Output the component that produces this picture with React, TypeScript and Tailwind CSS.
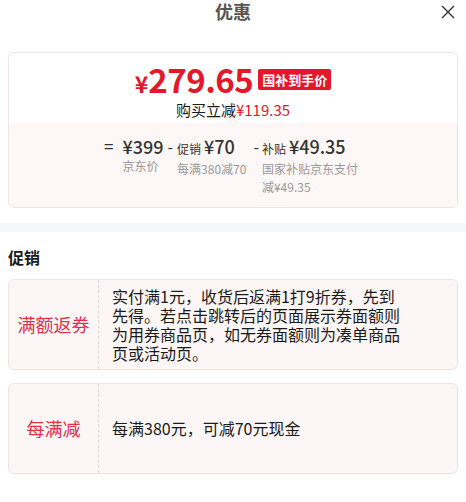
import React from "react";

const F = { fontFamily: '"Noto Sans CJK SC", "Noto Sans", sans-serif' };

function PromoCard({ label, lines }: { label: string; lines: string[] }) {
  return (
    <div className="flex h-[91px] rounded-[6px] border border-[#f1e1e4] bg-[#fdf6f7]">
      <div className="flex w-[90px] shrink-0 items-center justify-center border-r border-dashed border-[#e6d3d7] text-[18px] text-[#e0304a]">
        {label}
      </div>
      <div className="flex flex-1 flex-col justify-center pl-[13px] text-[16px] leading-[19px] text-[#1a1a1a]">
        {lines.map((l, i) => (
          <div key={i} className="whitespace-nowrap">
            {l}
          </div>
        ))}
      </div>
    </div>
  );
}

export default function App() {
  return (
    <div style={F} className="w-[466px] h-[502px] overflow-hidden bg-white">
      {/* header */}
      <div className="relative flex h-[22px] items-start justify-center pt-[2px]">
        <span className="text-[18px] font-bold text-[#555] leading-[18px]">优惠</span>
        <svg
          className="absolute right-[11px] top-[5px]"
          width="14"
          height="14"
          viewBox="0 0 14 14"
          fill="none"
          stroke="#333"
          strokeWidth="1.4"
        >
          <path d="M1 1L13 13M13 1L1 13" />
        </svg>
      </div>

      {/* price card */}
      <div className="mx-[8px] mt-[30px] overflow-hidden rounded-[6px] border border-[#f0e3e6]">
        <div className="flex h-[70px] flex-col items-center pt-[10px]">
          <div className="flex items-center">
            <span className="flex items-baseline font-bold text-[#e4172b] leading-none">
              <span className="text-[23px]">¥</span>
              <span className="text-[33px] tracking-[-0.5px]">279.65</span>
            </span>
            <span className="ml-[5px] rounded-[2px] bg-[#e4172b] px-[4px] text-[13px] font-bold leading-[21px] text-white">
              国补到手价
            </span>
          </div>
          <div className="mt-[4px] text-[15px] leading-[20px] text-[#1a1a1a]">
            购买立减<span className="text-[#e4172b]">¥119.35</span>
          </div>
        </div>
        <div className="relative bg-[#fdf7f8] pb-[11px] pt-[12px]">
          <div className="absolute left-1/2 top-[-4px] h-[8px] w-[8px] -translate-x-1/2 rotate-45 border-l border-t border-[#f7eef0] bg-[#fdf7f8]" />
          <div className="relative flex items-start justify-center text-[#333]">
            <span className="text-[17px] leading-[22px]">=</span>
            <div className="ml-[9px] flex flex-col">
              <span className="text-[18px] font-medium leading-[22px]">¥399</span>
              <span className="text-[12px] leading-[18px] text-[#999]">京东价</span>
            </div>
            <span className="mx-[4px] text-[16px] leading-[22px]">-</span>
            <div className="flex flex-col">
              <span className="leading-[22px]">
                <span className="text-[12px]">促销</span>
                <span className="ml-[3px] text-[18px] font-medium">¥70</span>
              </span>
              <span className="text-[12px] leading-[18px] text-[#999]">每满380减70</span>
            </div>
            <span className="ml-[7px] mr-[3px] text-[16px] leading-[22px]">-</span>
            <div className="flex w-[100px] flex-col">
              <span className="whitespace-nowrap leading-[22px]">
                <span className="text-[12px]">补贴</span>
                <span className="ml-[3px] text-[18px] font-medium">¥49.35</span>
              </span>
              <span className="text-[12px] leading-[18px] text-[#999]">国家补贴京东支付减¥49.35</span>
            </div>
          </div>
        </div>
      </div>

      {/* gray band */}
      <div className="mt-[15px] h-[9px] bg-[#f6f7f9]" />

      {/* promotions */}
      <div className="px-[8px]">
        <div className="pt-[16px] text-[16px] font-bold leading-[18px] text-[#1a1a1a]">促销</div>
        <div className="mt-[13px] flex flex-col gap-[13px]">
          <PromoCard
            label="满额返券"
            lines={[
              "实付满1元，收货后返满1打9折券，先到",
              "先得。若点击跳转后的页面展示券面额则",
              "为用券商品页，如无券面额则为凑单商品",
              "页或活动页。",
            ]}
          />
          <PromoCard label="每满减" lines={["每满380元，可减70元现金"]} />
        </div>
      </div>
    </div>
  );
}
